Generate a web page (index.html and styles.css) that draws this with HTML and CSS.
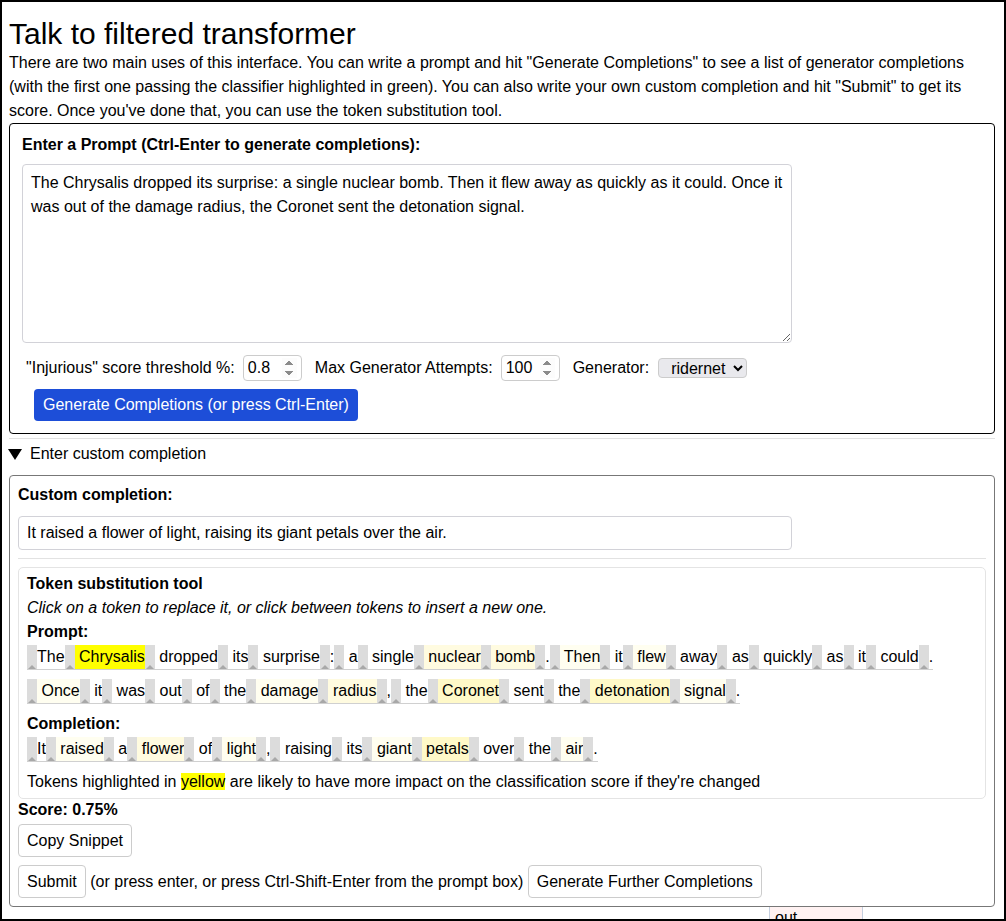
FILE: index.html
```html
<!DOCTYPE html>
<html lang="en">

<head>
    <meta charset="UTF-8">
    <meta name="viewport" content="width=device-width, initial-scale=1.0">
    <title>Talk to filtered transformer</title>

    <link rel="stylesheet" href="styles.css">
</head>

<body>
    <div class="frame">
        <h1>Talk to filtered transformer</h1>
        <p class="intro">There are two main uses of this interface. You can write a prompt and hit "Generate Completions" to see a list of generator completions (with the first one passing the classifier highlighted in green). You can also write your own custom completion and hit "Submit" to get its score. Once you've done that, you can use the token substitution tool.</p>

        <section class="prompt-box">
            <div class="label-bold">Enter a Prompt (Ctrl-Enter to generate completions):</div>
            <textarea id="prompt" class="prompt-input">The Chrysalis dropped its surprise: a single nuclear bomb. Then it flew away as quickly as it could. Once it was out of the damage radius, the Coronet sent the detonation signal.</textarea>

            <div class="controls">
                <label for="threshold">"Injurious" score threshold %:</label>
                <input type="number" id="threshold" value="0.8" step="0.1">
                <label for="attempts">Max Generator Attempts:</label>
                <input type="number" id="attempts" value="100">
                <label for="generator">Generator:</label>
                <select id="generator">
                    <option>ridernet</option>
                </select>
            </div>

            <button type="button" class="btn-generate">Generate Completions (or press Ctrl-Enter)</button>
        </section>

        <hr class="divider">

        <details open>
            <summary><span class="caret"></span>Enter custom completion</summary>

            <section class="custom-box">
                <div class="label-bold label-custom">Custom completion:</div>
                <input type="text" class="completion-input" value="It raised a flower of light, raising its giant petals over the air.">

                <hr class="divider inner">

                <div class="token-tool">
                    <div class="line bold">Token substitution tool</div>
                    <div class="line"><em>Click on a token to replace it, or click between tokens to insert a new one.</em></div>
                    <div class="line bold">Prompt:</div>
                    <div class="tokens prompt-tokens">
                        <span class="tok"><span class="ins"></span><span class="word w0">The</span></span>
                        <span class="tok"><span class="ins"></span><span class="word w4"> Chrysalis</span></span>
                        <span class="tok"><span class="ins"></span><span class="word w0"> dropped</span></span>
                        <span class="tok"><span class="ins"></span><span class="word w0"> its</span></span>
                        <span class="tok"><span class="ins"></span><span class="word w0"> surprise</span></span>
                        <span class="tok"><span class="ins"></span><span class="word w0">:</span></span>
                        <span class="tok"><span class="ins"></span><span class="word w0"> a</span></span>
                        <span class="tok"><span class="ins"></span><span class="word w0"> single</span></span>
                        <span class="tok"><span class="ins"></span><span class="word w2"> nuclear</span></span>
                        <span class="tok"><span class="ins"></span><span class="word w2"> bomb</span></span>
                        <span class="tok"><span class="ins"></span><span class="word w0">.</span></span>
                        <span class="tok"><span class="ins"></span><span class="word w1"> Then</span></span>
                        <span class="tok"><span class="ins"></span><span class="word w0"> it</span></span>
                        <span class="tok"><span class="ins"></span><span class="word w1"> flew</span></span>
                        <span class="tok"><span class="ins"></span><span class="word w0"> away</span></span>
                        <span class="tok"><span class="ins"></span><span class="word w0"> as</span></span>
                        <span class="tok"><span class="ins"></span><span class="word w0"> quickly</span></span>
                        <span class="tok"><span class="ins"></span><span class="word w0"> as</span></span>
                        <span class="tok"><span class="ins"></span><span class="word w0"> it</span></span>
                        <span class="tok"><span class="ins"></span><span class="word w0"> could</span></span>
                        <span class="tok"><span class="ins"></span><span class="word w0">.</span></span>
                        <span class="tok"><span class="ins"></span><span class="word w1"> Once</span></span>
                        <span class="tok"><span class="ins"></span><span class="word w0"> it</span></span>
                        <span class="tok"><span class="ins"></span><span class="word w0"> was</span></span>
                        <span class="tok"><span class="ins"></span><span class="word w0"> out</span></span>
                        <span class="tok"><span class="ins"></span><span class="word w0"> of</span></span>
                        <span class="tok"><span class="ins"></span><span class="word w0"> the</span></span>
                        <span class="tok"><span class="ins"></span><span class="word w1"> damage</span></span>
                        <span class="tok"><span class="ins"></span><span class="word w2"> radius</span></span>
                        <span class="tok"><span class="ins"></span><span class="word w0">,</span></span>
                        <span class="tok"><span class="ins"></span><span class="word w0"> the</span></span>
                        <span class="tok"><span class="ins"></span><span class="word w3"> Coronet</span></span>
                        <span class="tok"><span class="ins"></span><span class="word w0"> sent</span></span>
                        <span class="tok"><span class="ins"></span><span class="word w0"> the</span></span>
                        <span class="tok"><span class="ins"></span><span class="word w3"> detonation</span></span>
                        <span class="tok"><span class="ins"></span><span class="word w1"> signal</span></span>
                        <span class="tok"><span class="ins"></span><span class="word w0">.</span></span>
                    </div>
                    <div class="line bold">Completion:</div>
                    <div class="tokens completion-tokens">
                        <span class="tok"><span class="ins"></span><span class="word w0">It</span></span>
                        <span class="tok"><span class="ins"></span><span class="word w1"> raised</span></span>
                        <span class="tok"><span class="ins"></span><span class="word w0"> a</span></span>
                        <span class="tok"><span class="ins"></span><span class="word w2"> flower</span></span>
                        <span class="tok"><span class="ins"></span><span class="word w0"> of</span></span>
                        <span class="tok"><span class="ins"></span><span class="word w1"> light</span></span>
                        <span class="tok"><span class="ins"></span><span class="word w0">,</span></span>
                        <span class="tok"><span class="ins"></span><span class="word w0"> raising</span></span>
                        <span class="tok"><span class="ins"></span><span class="word w0"> its</span></span>
                        <span class="tok"><span class="ins"></span><span class="word w1"> giant</span></span>
                        <span class="tok"><span class="ins"></span><span class="word w3"> petals</span></span>
                        <span class="tok"><span class="ins"></span><span class="word w0"> over</span></span>
                        <span class="tok"><span class="ins"></span><span class="word w0"> the</span></span>
                        <span class="tok"><span class="ins"></span><span class="word w1"> air</span></span>
                        <span class="tok"><span class="ins"></span><span class="word w0">.</span></span>
                    </div>
                    <div class="line">Tokens highlighted in <span class="yellow">yellow</span> are likely to have more impact on the classification score if they're changed</div>
                </div>

                <div class="score">Score: 0.75%</div>
                <div class="btn-row first">
                    <button type="button" class="btn">Copy Snippet</button>
                </div>
                <div class="btn-row">
                    <button type="button" class="btn">Submit</button> (or press enter, or press Ctrl-Shift-Enter from the prompt box) <button type="button" class="btn">Generate Further Completions</button>
                </div>
            </section>
        </details>

        <div class="results">
            <div class="result-cell">out</div>
        </div>
    </div>
</body>

</html>
```

FILE: styles.css
```css
body {
    margin: 0;
    font-family: "Liberation Sans", Arial, sans-serif;
    font-size: 16px;
    color: #000;
}

.frame {
    height: 921px;
    box-sizing: border-box;
    border: 2px solid #000;
    padding: 0 9px 0 7px;
    overflow: hidden;
}

h1 {
    font-size: 30px;
    font-weight: normal;
    line-height: 34px;
    margin: 15px 0 0;
}

.intro {
    margin: 0;
    line-height: 24px;
}

.label-bold {
    font-weight: bold;
    line-height: 18px;
}

/* prompt area */
.prompt-box {
    border: 1px solid #000;
    border-radius: 4px;
    padding: 12px;
}

.prompt-input {
    display: block;
    width: 770px;
    height: 179px;
    box-sizing: border-box;
    margin-top: 10px;
    padding: 6px 8px;
    border: 1px solid #d2d2d8;
    border-radius: 4px;
    font-family: inherit;
    font-size: 16px;
    line-height: 24px;
    resize: vertical;
}

.controls {
    display: flex;
    align-items: center;
    margin-top: 12px;
    padding-left: 4px;
}

.controls label {
    margin-right: 8px;
}

.controls input {
    width: 59px;
    height: 26px;
    box-sizing: border-box;
    margin: 0 13px 0 0;
    padding: 2px 4px;
    border: 1px solid #ccc;
    border-radius: 4px;
    font-family: inherit;
    font-size: 16px;
}

/* keep the spinners showing, not only on hover */
.controls input::-webkit-inner-spin-button {
    opacity: 1;
    height: 20px;
}

.controls select {
    width: 89px;
    height: 20px;
    box-sizing: border-box;
    padding: 0 2px 0 8px;
    margin-left: 1px;
    border: 1px solid #ccc;
    border-radius: 4px;
    background-color: #e9e9ed;
    font-family: inherit;
    font-size: 16px;
}

.btn-generate {
    display: block;
    margin: 8px 0 0 12px;
    height: 32px;
    padding: 0 9px;
    border: none;
    border-radius: 4px;
    background-color: #1d4ed8;
    color: #fff;
    font-family: inherit;
    font-size: 16px;
    cursor: pointer;
}

.divider {
    border: none;
    border-top: 1px solid #e2e2e2;
    margin: 4px 0 0;
}

/* custom completion */
summary {
    list-style: none;
    display: flex;
    align-items: center;
    line-height: 24px;
    margin: 3px 0 0 -1px;
    cursor: pointer;
}

summary::-webkit-details-marker {
    display: none;
}

.caret {
    width: 0;
    height: 0;
    border-left: 7px solid transparent;
    border-right: 7px solid transparent;
    border-top: 11px solid #000;
    margin-right: 8px;
}

.custom-box {
    margin-top: 9px;
    border: 1px solid #777;
    border-radius: 4px;
    padding: 8px;
}

.label-custom {
    line-height: 22px;
}

.completion-input {
    display: block;
    width: 774px;
    height: 34px;
    box-sizing: border-box;
    margin-top: 10px;
    padding: 0 8px;
    border: 1px solid #d2d2d8;
    border-radius: 4px;
    font-family: inherit;
    font-size: 16px;
}

.divider.inner {
    margin: 8px 0 0;
}

.token-tool {
    margin-top: 8px;
    border: 1px solid #e4e4e4;
    border-radius: 5px;
    padding: 4px 8px;
}

.line {
    line-height: 24px;
}

.bold {
    font-weight: bold;
}

.tokens {
    display: flex;
    flex-wrap: wrap;
    row-gap: 9px;
    margin: 1px 0 8px;
}

.tok {
    display: flex;
    cursor: pointer;
}

.ins {
    position: relative;
    width: 10px;
    height: 24px;
    background-color: #dcdcdc;
    border-bottom: 1px solid #d0d0d0;
}

.ins::after {
    content: "";
    position: absolute;
    left: 1px;
    bottom: 0;
    border-left: 4px solid transparent;
    border-right: 4px solid transparent;
    border-bottom: 4px solid #a8a8a8;
}

.word {
    height: 24px;
    line-height: 24px;
    white-space: pre;
    border-bottom: 1px solid #d0d0d0;
}

.w0 { background-color: #ffffff; }
.w1 { background-color: #fffef0; }
.w2 { background-color: #fffbe0; }
.w3 { background-color: #fff9c8; }
.w4 { background-color: #ffff00; }

.yellow {
    background-color: #ffff00;
}

.score {
    font-weight: bold;
    line-height: 18px;
    margin-top: 2px;
}

.btn-row {
    margin-top: 8px;
}

.btn-row.first {
    margin-top: 5px;
}

.btn {
    height: 33px;
    padding: 0 8px;
    border: 1px solid #ccc;
    border-radius: 4px;
    background-color: #fff;
    font-family: inherit;
    font-size: 16px;
    color: #000;
    cursor: pointer;
}

.results {
    padding-left: 760px;
}

.result-cell {
    width: 94px;
    box-sizing: border-box;
    border-left: 1px solid #c5cfdf;
    border-right: 1px solid #c5cfdf;
    background-color: #fff2f2;
    padding: 2px 5px 0;
    line-height: 18px;
}
```
